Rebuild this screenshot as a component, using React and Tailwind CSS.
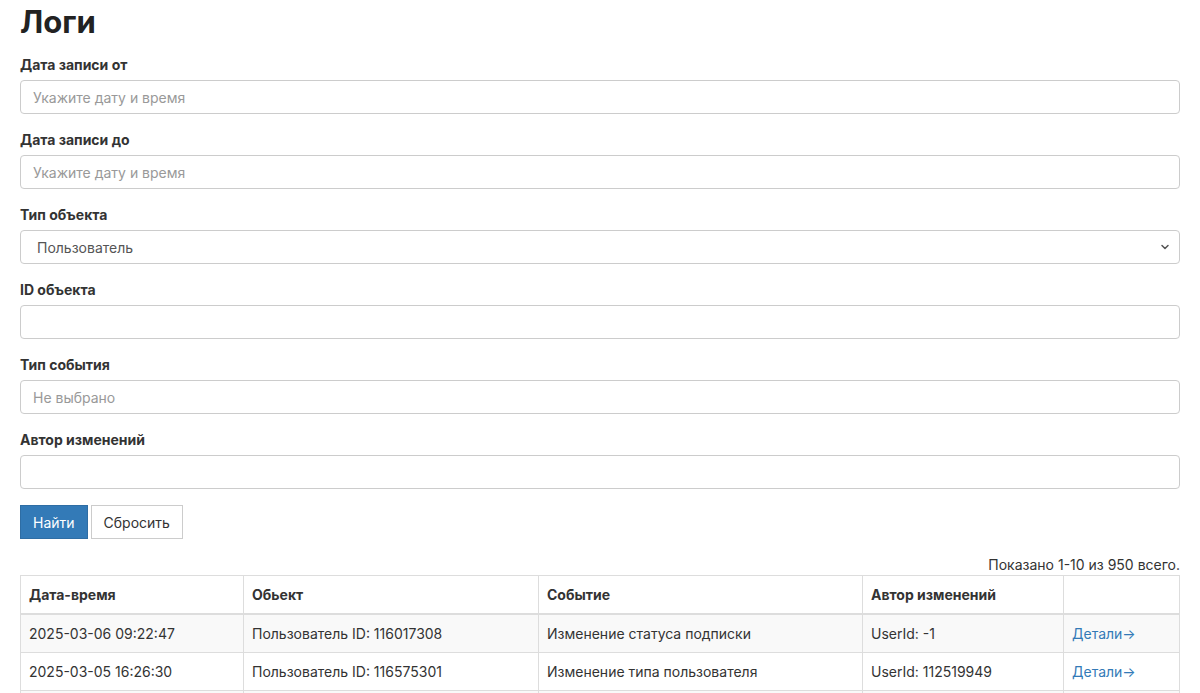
import { ChevronDown } from "lucide-react";

const fields = [
  { label: "Дата записи от", placeholder: "Укажите дату и время" },
  { label: "Дата записи до", placeholder: "Укажите дату и время" },
  { label: "Тип объекта", select: "Пользователь" },
  { label: "ID объекта", placeholder: "" },
  { label: "Тип события", placeholder: "Не выбрано" },
  { label: "Автор изменений", placeholder: "" },
];

const rows = [
  ["2025-03-06 09:22:47", "Пользователь ID: 116017308", "Изменение статуса подписки", "UserId: -1"],
  ["2025-03-05 16:26:30", "Пользователь ID: 116575301", "Изменение типа пользователя", "UserId: 112519949"],
  ["2025-03-05 16:20:11", "Пользователь ID: 116575301", "Изменение статуса подписки", "UserId: 112519949"],
];

const cols = ["w-[223px]", "w-[295px]", "w-[324px]", "w-[201px]", ""];

export default function App() {
  return (
    <div className="px-5 text-[14px] text-[#333] font-['Inter','Noto_Sans',sans-serif] bg-white min-h-[693px]">
      <h1 className="text-[31px] font-bold leading-[44px] mb-[11px] text-[#222]">Логи</h1>

      {fields.map((f) => (
        <div key={f.label} className="mb-4">
          <label className="block font-bold leading-5 mb-[5px]">{f.label}</label>
          {f.select ? (
            <div className="h-[34px] border border-[#ccc] rounded flex items-center justify-between pl-4 pr-2 text-[#555]">
              <span>{f.select}</span>
              <ChevronDown size={12} strokeWidth={3} className="text-[#555]" />
            </div>
          ) : (
            <input
              className="w-full h-[34px] border border-[#ccc] rounded px-3 outline-none placeholder:text-[#999]"
              placeholder={f.placeholder}
            />
          )}
        </div>
      ))}

      <div className="flex gap-[3px] mt-[1px]">
        <button className="h-[34px] px-3 bg-[#337ab7] border border-[#2e6da4] text-white">Найти</button>
        <button className="h-[34px] px-3 bg-white border border-[#ccc] text-[#333]">Сбросить</button>
      </div>

      <div className="text-right leading-5 mt-4 text-[#333]">Показано 1-10 из 950 всего.</div>

      <table className="w-full border-collapse border border-[#ddd] table-fixed">
        <thead>
          <tr>
            {["Дата-время", "Обьект", "Событие", "Автор изменений", ""].map((h, i) => (
              <th key={i} className={`${cols[i]} text-left font-bold leading-[21px] p-2 border border-[#ddd] border-b-2`}>
                {h}
              </th>
            ))}
          </tr>
        </thead>
        <tbody>
          {rows.map((r, i) => (
            <tr key={i} className={i % 2 === 0 ? "bg-[#f9f9f9]" : "bg-white"}>
              {r.map((c, j) => (
                <td key={j} className="leading-5 px-2 py-[8.5px] border border-[#ddd]">{c}</td>
              ))}
              <td className="leading-5 px-2 py-[8.5px] border border-[#ddd]">
                <a className="text-[#337ab7]" href="#">Детали→</a>
              </td>
            </tr>
          ))}
        </tbody>
      </table>
    </div>
  );
}
